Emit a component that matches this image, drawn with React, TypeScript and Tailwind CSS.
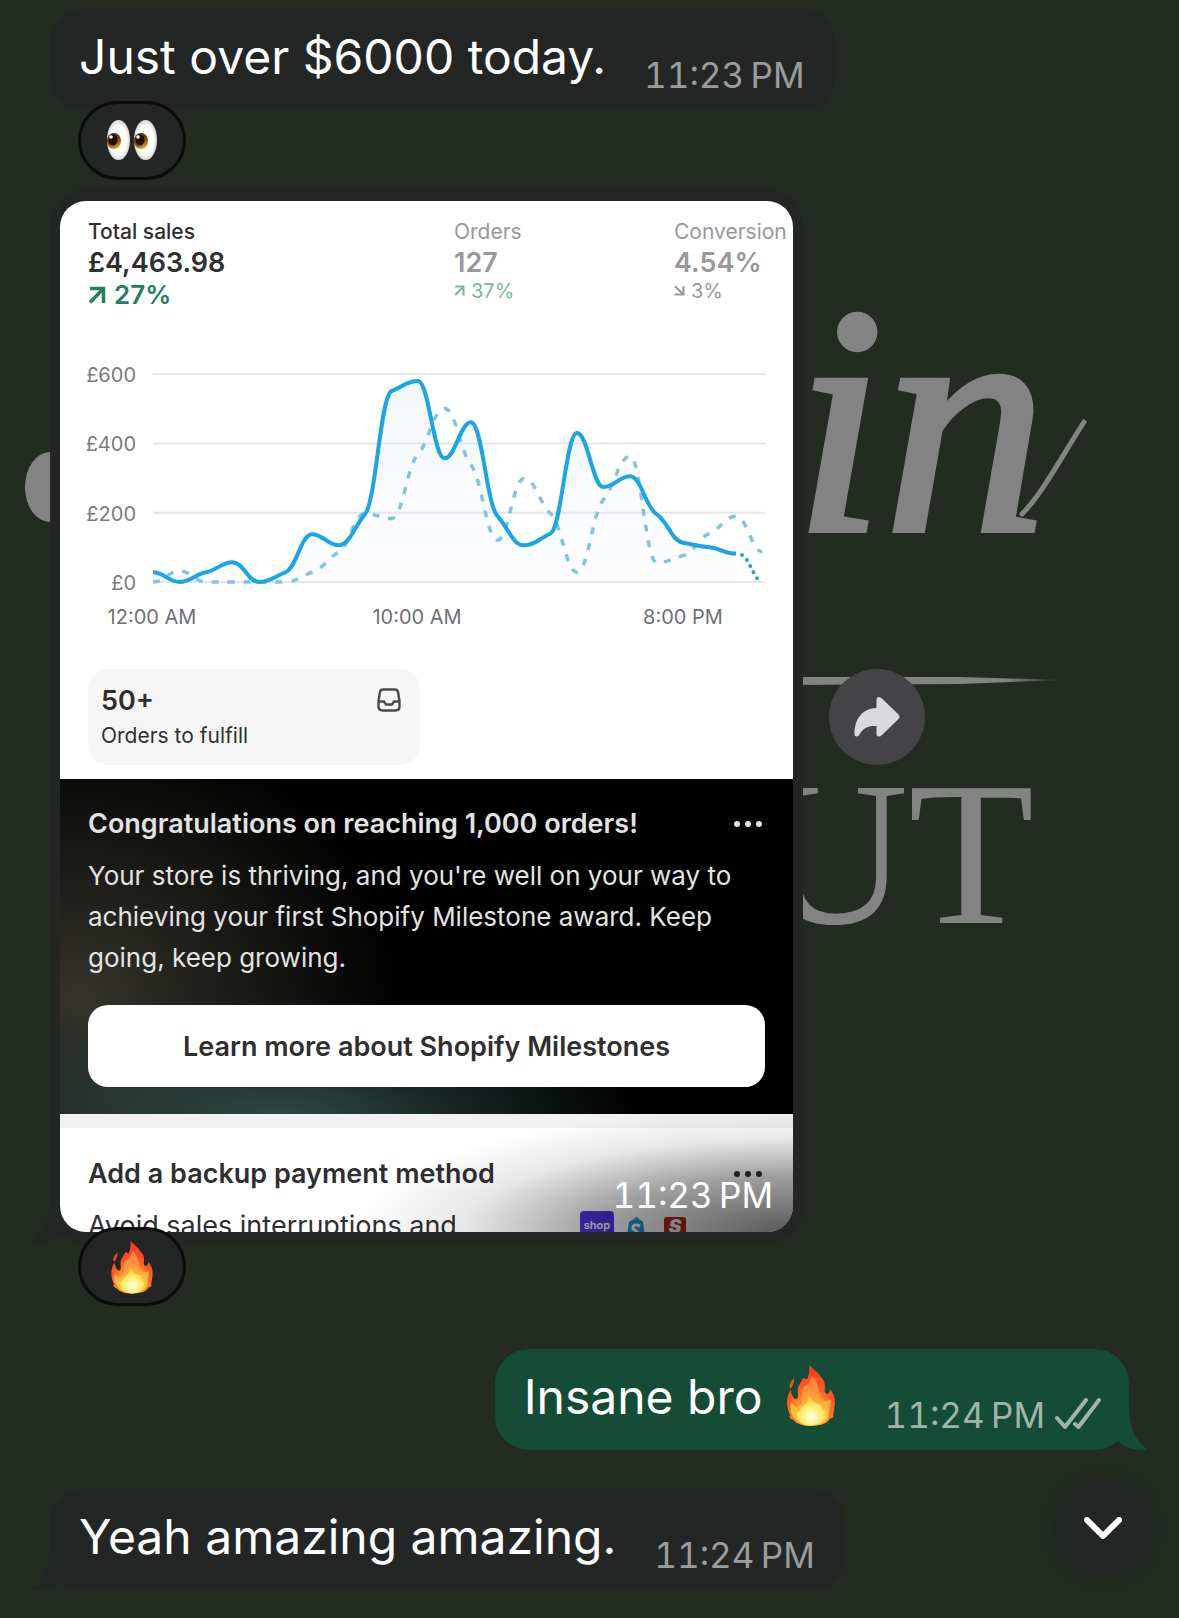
import { useId } from "react";
import type { ReactNode } from "react";

const HOUR_WIDTH = 26.5;
const BASELINE = 273;
const PX_PER_POUND = 0.3465;

// Hourly sales in pounds, midnight to 11 PM.
const TODAY = [
  28, 0, 28, 57, 0, 28, 138, 106, 196, 551, 580, 357, 461, 190, 106, 140, 430,
  274, 305, 196, 113, 100, 82,
];
const YESTERDAY = [
  0, 32, 0, 0, 0, 0, 28, 86, 198, 183, 369, 501, 338, 121, 299, 198, 28, 238,
  363, 56, 76, 140, 190, 87,
];

type Point = [number, number];

function toPoints(values: number[]): Point[] {
  return values.map((v, i) => [
    93 + i * HOUR_WIDTH,
    BASELINE - v * PX_PER_POUND,
  ]);
}

// Monotone cubic interpolation, so the line never overshoots a data point.
function smoothPath(points: Point[]) {
  const slopes = points
    .slice(1)
    .map(([x, y], i) => (y - points[i][1]) / (x - points[i][0]));
  const tangents = points.map((_, i) => {
    if (i === 0 || i === points.length - 1) return 0;
    const a = slopes[i - 1];
    const b = slopes[i];
    if (a * b <= 0) return 0;
    return Math.sign(a) * Math.min(Math.abs(a), Math.abs(b), Math.abs(a + b) / 4);
  });

  let d = `M${points[0][0]} ${points[0][1]}`;
  for (let i = 1; i < points.length; i++) {
    const [x0, y0] = points[i - 1];
    const [x1, y1] = points[i];
    const dx = (x1 - x0) / 2.4;
    d += `C${x0 + dx} ${y0 + dx * tangents[i - 1]} ${x1 - dx} ${y1 - dx * tangents[i]} ${x1} ${y1}`;
  }
  return d;
}

function SalesChart() {
  const fill = useId();
  const today = smoothPath(toPoints(TODAY));

  return (
    <svg
      viewBox="0 0 733 360"
      className="block w-full"
      role="img"
      aria-label="Total sales by hour"
      fontFamily="Inter, sans-serif"
      fontSize="20"
    >
      <defs>
        <linearGradient id={fill} x1="0" y1="0" x2="0" y2="1">
          <stop offset="0" stopColor="#f3f8fb" />
          <stop offset="1" stopColor="#fdfdfe" />
        </linearGradient>
      </defs>
      <path d={`${today}V273H93Z`} fill={`url(#${fill})`} />
      {[600, 400, 200, 0].map((v) => (
        <g key={v}>
          <path
            d={`M93 ${BASELINE - v * PX_PER_POUND}H705`}
            stroke="#e6e6e7"
            strokeWidth="2"
          />
          <text
            x="76"
            y={BASELINE + 8 - v * PX_PER_POUND}
            textAnchor="end"
            fill="#7b7b80"
          >
            £{v}
          </text>
        </g>
      ))}
      <path
        d={smoothPath(toPoints(YESTERDAY))}
        fill="none"
        stroke="#80c3e2"
        strokeWidth="3.5"
        strokeDasharray="7 9"
      />
      <path d={today} fill="none" stroke="#1ba5e4" strokeWidth="4" />
      <path
        d="M682 246C689 250 691 262 699 272"
        fill="none"
        stroke="#1ba5e4"
        strokeWidth="4"
        strokeDasharray="0 7"
        strokeLinecap="round"
      />
      <g textAnchor="middle" fill="#6f6f74">
        <text x="92" y="315">12:00 AM</text>
        <text x="357" y="315">10:00 AM</text>
        <text x="623" y="315">8:00 PM</text>
      </g>
    </svg>
  );
}

function Wallpaper() {
  const fade = useId();
  return (
    <svg
      viewBox="0 0 1179 1618"
      preserveAspectRatio="xMidYMin slice"
      className="absolute inset-0 h-full w-full"
      fill="#838383"
      aria-hidden="true"
    >
      <defs>
        <linearGradient id={fade}>
          <stop offset="0.8" stopColor="#838383" />
          <stop offset="1" stopColor="#838383" stopOpacity="0" />
        </linearGradient>
      </defs>
      <ellipse cx="50" cy="487" rx="25" ry="35" />
      <text
        x="794"
        y="530"
        fontFamily="Liberation Serif, serif"
        fontStyle="italic"
        fontSize="325"
        stroke="#838383"
        strokeWidth="6"
      >
        in
      </text>
      <path
        d="M1022 514C1042 494 1062 456 1084 422"
        fill="none"
        stroke="#838383"
        strokeWidth="5"
        strokeLinecap="round"
      />
      <path d="M780 677H960L1064 680L960 684L780 685Z" fill={`url(#${fade})`} />
      <text
        x="1034"
        y="923"
        textAnchor="end"
        fontFamily="Liberation Serif, serif"
        fontSize="206"
      >
        UT
      </text>
    </svg>
  );
}

function Fire({ className }: { className: string }) {
  const id = useId();
  return (
    <svg viewBox="32 28 146 186" className={className} role="img" aria-label="fire">
      <defs>
        <radialGradient id={`${id}a`} cx="0.5" cy="0.85" r="0.85">
          <stop offset="0" stopColor="#ffd83a" />
          <stop offset="0.35" stopColor="#ff9a2e" />
          <stop offset="0.6" stopColor="#ff5a26" />
          <stop offset="1" stopColor="#f8361c" />
        </radialGradient>
        <linearGradient id={`${id}b`} x1="0" y1="0" x2="0" y2="1">
          <stop offset="0" stopColor="#ff7a3c" />
          <stop offset="0.5" stopColor="#ffa63a" />
          <stop offset="1" stopColor="#ffe23c" />
        </linearGradient>
        <radialGradient id={`${id}c`} cx="0.5" cy="0.72" r="0.6">
          <stop offset="0" stopColor="#fffef0" />
          <stop offset="0.35" stopColor="#fff59a" />
          <stop offset="1" stopColor="#ffd92e" />
        </radialGradient>
      </defs>
      <path
        d="M54 70C55 82 52 93 43 103C38 97 38 88 54 70Z"
        fill="#f9482a"
      />
      <path
        d="M99 30C112 44 126 52 135 68C147 78 148 90 146 110C150 122 161 120 162 103C174 117 179 136 176 154C174 170 170 180 173 185C171 190 167 191 163 191C158 199 150 206 140 209C116 215 92 215 76 210C66 207 56 201 52 195C46 195 41 189 39 183L44 184C36 170 31 150 34 132C36 119 40 111 45 106C46 120 52 134 61 133C69 130 65 118 65 108C65 92 74 88 79 74C81 70 84 69 86 70C89 74 92 76 95 71C100 58 101 44 99 30Z"
        fill={`url(#${id}a)`}
      />
      <path
        d="M107 65C128 78 124 103 135 128C142 142 158 140 164 131C164 152 158 174 157 186C146 206 120 212 105 212C82 212 58 200 47 176C42 163 42 151 47 143C53 158 70 160 76 148C82 133 75 119 80 103C84 93 104 88 107 65Z"
        fill={`url(#${id}b)`}
      />
      <path
        d="M98 122C106 134 116 148 132 149C143 156 136 168 149 170C150 188 136 212 104 212C76 212 60 190 62 174C72 178 72 158 84 152C94 146 98 136 98 122Z"
        fill={`url(#${id}c)`}
      />
    </svg>
  );
}

function Eyes() {
  const id = useId();
  return (
    <svg viewBox="0 0 52 42" className="mb-0.5 h-[42px] w-[52px]" role="img" aria-label="eyes">
      <defs>
        <radialGradient id={`${id}w`}>
          <stop offset="0.7" stopColor="#ffffff" />
          <stop offset="1" stopColor="#d4d4d4" />
        </radialGradient>
        <linearGradient id={`${id}i`} x1="0.3" y1="0" x2="0.7" y2="1">
          <stop offset="0" stopColor="#4a2408" />
          <stop offset="0.5" stopColor="#7a450c" />
          <stop offset="1" stopColor="#eeb00c" />
        </linearGradient>
      </defs>
      {[0, 27].map((x) => (
        <g key={x} transform={`translate(${x} 0)`}>
          <ellipse cx="12.5" cy="21" rx="11.5" ry="20" fill={`url(#${id}w)`} />
          <ellipse cx="8" cy="22" rx="7" ry="8" fill={`url(#${id}i)`} />
          <ellipse cx="7" cy="21" rx="4.5" ry="5.5" fill="#220d02" />
          <circle cx="5" cy="18" r="1.8" fill="#ffffff" />
        </g>
      ))}
    </svg>
  );
}

function Tail({ className }: { className: string }) {
  return (
    <svg
      viewBox="0 0 36 48"
      className={`absolute bottom-0 h-12 w-9 ${className}`}
      fill="currentColor"
      aria-hidden="true"
    >
      <path d="M18 0C18 22 22 36 36 47C36 48 35 48 33 48C20 48 12 44 6 39L0 20Z" />
    </svg>
  );
}

// Hours and period are joined by a narrow no-break space.
function Time({ children }: { children: ReactNode }) {
  return (
    <time className="text-[35px] leading-10 whitespace-nowrap tabular-nums">
      {children}
    </time>
  );
}

function Reaction({ children }: { children: ReactNode }) {
  return (
    <button
      type="button"
      className="relative ml-7 flex h-[79px] w-[108px] items-center justify-center rounded-full border-3 border-[#0b0c0b] bg-[#242626]"
    >
      {children}
    </button>
  );
}

function TextBubble({ text, time }: { text: string; time: string }) {
  return (
    <div className="relative flex w-fit items-end gap-[38px] rounded-[34px] bg-[#242626] pt-4 pr-[30px] pb-[15px] pl-[29px]">
      <p className="pb-1.5 text-[48px] leading-16 whitespace-nowrap text-white">{text}</p>
      <span className="text-[#9b9c9c]">
        <Time>{time}</Time>
      </span>
    </div>
  );
}

function Trend({ down, className }: { down?: boolean; className: string }) {
  return (
    <svg
      viewBox="0 0 18 18"
      className={`${className} ${down ? "rotate-90" : ""}`}
      fill="none"
      stroke="currentColor"
      strokeWidth="3.5"
      aria-hidden="true"
    >
      <path d="M2 2.5H15.5V17M15 3L2 16.5" />
    </svg>
  );
}

function Metric({
  label,
  value,
  change,
  down,
}: {
  label: string;
  value: string;
  change: string;
  down?: boolean;
}) {
  return (
    <div className="whitespace-nowrap text-[#98989a]">
      <p className="text-[21px] leading-[26px]">{label}</p>
      <p className="text-[27px] leading-9 font-semibold">{value}</p>
      <p
        className={`flex items-center gap-1.5 text-[20px] leading-5 ${down ? "" : "text-[#7db89b]"}`}
      >
        <Trend down={down} className="mb-0.5 h-[11px] w-[11px]" />
        {change}
      </p>
    </div>
  );
}

function MoreButton({ label }: { label: string }) {
  return (
    <button type="button" aria-label={label} className="mr-[3px] flex items-center gap-[5px]">
      <span className="h-1.5 w-1.5 rounded-full bg-current" />
      <span className="h-1.5 w-1.5 rounded-full bg-current" />
      <span className="h-1.5 w-1.5 rounded-full bg-current" />
    </button>
  );
}

function StoreScreenshot() {
  return (
    <figure className="relative h-[1031px] overflow-hidden rounded-[26px] bg-white text-[#2f2f30]">
      <div className="grid grid-cols-[366px_220px_1fr] pt-[18px] pl-7">
        <div>
          <p className="text-[21px] leading-[26px] font-medium">Total sales</p>
          <p className="text-[27px] leading-9 font-semibold">£4,463.98</p>
          <p className="flex items-center gap-2 text-[26px] leading-7 font-semibold text-[#23805a]">
            <Trend className="h-[18px] w-[18px]" />
            27%
          </p>
        </div>
        <Metric label="Orders" value="127" change="37%" />
        <Metric label="Conversion rate" value="4.54%" change="3%" down />
      </div>

      <SalesChart />

      <div className="ml-7 flex h-24 w-[332px] items-start justify-between rounded-[20px] bg-[#f6f6f6] px-[13px] pt-[15px]">
        <div>
          <p className="text-[27px] leading-[34px] font-semibold">50+</p>
          <p className="text-[21px] leading-9">Orders to fulfill</p>
        </div>
        <svg
          viewBox="0 0 24 24"
          className="mt-1 mr-1.5 h-6 w-6"
          fill="none"
          stroke="#4a4a4a"
          strokeWidth="2.4"
          strokeLinejoin="round"
          aria-hidden="true"
        >
          <path d="M6 1.5H18Q20.5 1.5 21 4L22.5 13V18.5Q22.5 22.5 18.5 22.5H5.5Q1.5 22.5 1.5 18.5V13L3 4Q3.5 1.5 6 1.5Z" />
          <path d="M1.5 13.5H7L9 16.5H15L17 13.5H22.5" />
        </svg>
      </div>

      <section className="mt-3.5 bg-black bg-[radial-gradient(ellipse_360px_130px_at_220px_345px,#2f4b46,transparent),radial-gradient(ellipse_320px_280px_at_20px_220px,#34332c,transparent)] px-7 py-[27px] text-[#e3e3e3]">
        <div className="flex justify-between">
          <h2 className="text-[27px] leading-9 font-semibold whitespace-nowrap">
            Congratulations on reaching 1,000 orders!
          </h2>
          <MoreButton label="Milestone options" />
        </div>
        <p className="mt-[13px] text-[26px] leading-[41px]">
          Your store is thriving, and you're well on your way to achieving your
          first Shopify Milestone award. Keep going, keep growing.
        </p>
        <button
          type="button"
          className="mt-[27px] h-[82px] w-full rounded-[20px] bg-white pt-0.5 text-[27px] font-semibold text-[#2f2f30]"
        >
          Learn more about Shopify Milestones
        </button>
      </section>

      <section className="border-t-14 border-[#f1f1f1] px-7 pt-7">
        <div className="flex justify-between">
          <h2 className="text-[27px] leading-9 font-semibold">
            Add a backup payment method
          </h2>
          <MoreButton label="Payment options" />
        </div>
        <div className="mt-[13px] flex items-start">
          <p className="w-[492px] text-[27px] leading-[41px]">
            Avoid sales interruptions and
          </p>
          <div className="mt-1.5 flex items-start gap-3">
            <span className="h-9 w-[34px] rounded-[4px] bg-[#5433eb] pt-1.5 text-center text-[11px] leading-4 font-semibold text-white">
              shop
            </span>
            <svg viewBox="0 0 20 28" className="mt-1 h-7 w-5" aria-hidden="true">
              <path d="M3 7L8 4Q10 0 13 4L17 7L20 28H0Z" fill="#1c9bd8" />
              <path
                d="M14 11Q6 8 7 14Q13 17 12 21Q10 25 6 22"
                fill="none"
                stroke="#ffffff"
                strokeWidth="3"
              />
            </svg>
            <span className="mt-1.5 ml-1.5 h-[30px] w-[22px] rounded-[3px] bg-[#c3271f] text-center text-[19px] leading-5 font-black text-white italic">
              S
            </span>
          </div>
        </div>
      </section>

      <div className="absolute right-0 bottom-0 h-[124px] w-[440px] bg-[radial-gradient(ellipse_100%_100%_at_100%_100%,#000000a6,#00000060_45%,#00000018_75%,transparent)]" />
      <figcaption className="absolute right-5 bottom-[17px] text-white">
        <Time>{"11:23\u202fPM"}</Time>
      </figcaption>
    </figure>
  );
}

export default function App() {
  return (
    <main className="relative min-h-screen overflow-hidden bg-[#232b23] px-[50px] pt-[9px] pb-[27px] font-[Inter,sans-serif]">
      <Wallpaper />

      <TextBubble text="Just over $6000 today." time={"11:23\u202fPM"} />
      <div className="-mt-[9px]">
        <Reaction>
          <Eyes />
        </Reaction>
      </div>

      <div className="relative mt-2.5 flex items-center gap-[26px]">
        <div className="relative w-full max-w-[753px] min-w-0 rounded-[36px] bg-[#242626] px-2.5 py-[11px]">
          <Tail className="-left-[18px] -scale-x-100 text-[#242626]" />
          <StoreScreenshot />
        </div>
        <button
          type="button"
          aria-label="Forward"
          className="flex h-24 w-24 shrink-0 items-center justify-center rounded-full bg-[#444446]"
        >
          <svg viewBox="0 0 46 40" className="h-10 w-[46px]" fill="#dadadc" aria-hidden="true">
            <path d="M22.5 3Q22.5 0 25 0Q26.5 0 28 1.5L44.5 17.5Q46.5 20 44.5 22L28 38Q26.5 39.5 25 39.5Q22.5 39.5 22.5 37V29C14 28.5 9 31 5.5 37.5Q4.5 39.5 2.5 39.5Q0.5 39.5 0.5 37C0.5 21 9 11.5 22.5 11Z" />
          </svg>
        </button>
      </div>
      <div className="-mt-4">
        <Reaction>
          <Fire className="h-[54px] w-[42px]" />
        </Reaction>
      </div>

      <div className="relative mt-[43px] ml-auto flex w-fit items-end gap-12 rounded-[34px] bg-[#154c37] pt-4 pr-7 pb-[15px] pl-[29px]">
        <Tail className="-right-[18px] text-[#154c37]" />
        <p className="flex items-center gap-6 pb-1.5 text-[48px] leading-16 whitespace-nowrap text-white">
          Insane bro
          <Fire className="-mt-1 h-[62px] w-[50px]" />
        </p>
        <span className="flex items-center gap-2.5 text-[#9fb5aa]">
          <Time>{"11:24\u202fPM"}</Time>
          <svg
            viewBox="0 0 46 32"
            className="mb-0.5 h-8 w-[46px]"
            fill="none"
            stroke="currentColor"
            strokeWidth="4"
            strokeLinecap="round"
            strokeLinejoin="round"
            role="img"
            aria-label="Delivered"
          >
            <path d="M2 20L10 29L31 2M20 26L23.5 29L44 2" />
          </svg>
        </span>
      </div>

      <div className="relative mt-[39px]">
        <Tail className="-left-[18px] -scale-x-100 text-[#242626]" />
        <TextBubble text="Yeah amazing amazing." time={"11:24\u202fPM"} />
      </div>

      <button
        type="button"
        aria-label="Scroll to latest message"
        className="absolute right-7 bottom-[42px] flex h-24 w-24 items-center justify-center rounded-full bg-[#242626] shadow-[0_0_12px_#1f251f]"
      >
        <svg
          viewBox="0 0 38 22"
          className="h-[22px] w-[38px]"
          fill="none"
          stroke="#ffffff"
          strokeWidth="6"
          strokeLinecap="round"
          strokeLinejoin="round"
          aria-hidden="true"
        >
          <path d="M3 3L19 19L35 3" />
        </svg>
      </button>
    </main>
  );
}
